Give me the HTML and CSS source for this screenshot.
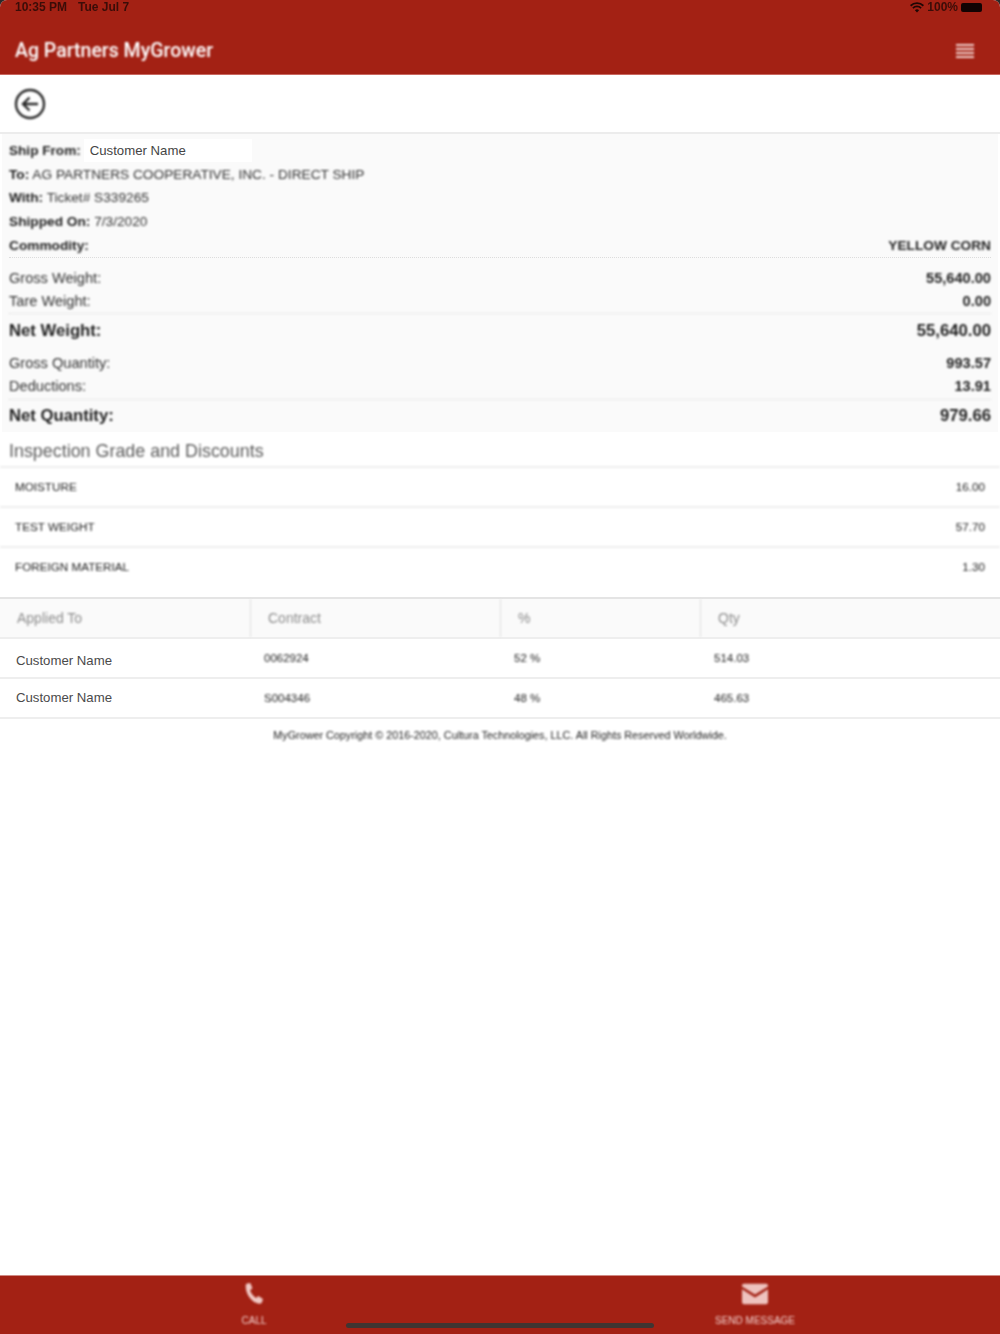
FILE: index.html
```html
<!DOCTYPE html>
<html lang="en">
<head>
<meta charset="utf-8">
<title>Ag Partners MyGrower</title>
<link rel="stylesheet" href="styles.css">
</head>
<body>
<div class="app">
  <header class="appbar">
    <div class="status soft-light">
      <div class="status-left"><span>10:35 PM</span><span>Tue Jul 7</span></div>
      <div class="status-right">
        <svg class="wifi" viewBox="0 0 14 11" width="14" height="11"><path d="M7 10.6 4.9 8.3a3 3 0 0 1 4.2 0L7 10.6ZM3.500 6.800 2.300 5.500a6.800 6.800 0 0 1 9.400 0l-1.200 1.300a5 5 0 0 0-7 0ZM1.200 4.400 0 3.100a10 10 0 0 1 14 0l-1.200 1.300a8.300 8.300 0 0 0-11.600 0Z" fill="#1e0705"/></svg>
        <span>100%</span>
        <span class="battery"></span>
      </div>
    </div>
    <div class="titlebar">
      <h1 class="title soft">Ag Partners MyGrower</h1>
      <svg class="menu soft" viewBox="0 0 18 14" width="18" height="14"><path d="M0 1h18M0 5h18M0 9h18M0 13h18" stroke="#f4d6d2" stroke-width="2"/></svg>
    </div>
  </header>

  <div class="toolbar">
    <svg class="back soft" viewBox="0 0 32 32" width="32" height="32"><circle cx="16" cy="16" r="14" fill="none" stroke="#2a2a2a" stroke-width="2.400"/><path d="M24 16H9M15.500 9.500 9 16l6.500 6.500" fill="none" stroke="#2a2a2a" stroke-width="2.400"/></svg>
  </div>

  <section class="ticket">
    <div class="row"><span class="ship-label soft">Ship From:</span><span class="name-chip">Customer Name</span></div>
    <div class="row soft"><span><b>To:</b> AG PARTNERS COOPERATIVE, INC. - DIRECT SHIP</span></div>
    <div class="row soft"><span><b>With:</b> Ticket# S339265</span></div>
    <div class="row soft"><span><b>Shipped On:</b> 7/3/2020</span></div>
    <div class="row split soft"><b>Commodity:</b><b>YELLOW CORN</b></div>
    <div class="group dotted">
      <div class="row split big soft"><span>Gross Weight:</span><b>55,640.00</b></div>
      <div class="row split big soft"><span>Tare Weight:</span><b>0.00</b></div>
    </div>
    <div class="row split total soft"><b>Net Weight:</b><b>55,640.00</b></div>
    <div class="group qty">
      <div class="row split big soft"><span>Gross Quantity:</span><b>993.57</b></div>
      <div class="row split big soft"><span>Deductions:</span><b>13.91</b></div>
    </div>
    <div class="row split total last soft"><b>Net Quantity:</b><b>979.66</b></div>
  </section>

  <h2 class="section-title soft">Inspection Grade and Discounts</h2>
  <ul class="grades soft">
    <li><span>MOISTURE</span><span>16.00</span></li>
    <li><span>TEST WEIGHT</span><span>57.70</span></li>
    <li><span>FOREIGN MATERIAL</span><span>1.30</span></li>
  </ul>

  <div class="applied">
    <div class="thead">
      <div class="th soft">Applied To</div>
      <div class="th soft">Contract</div>
      <div class="th soft">%</div>
      <div class="th soft">Qty</div>
    </div>
    <div class="tr">
      <div class="td name low">Customer Name</div>
      <div class="td soft">0062924</div>
      <div class="td soft">52 %</div>
      <div class="td soft">514.03</div>
    </div>
    <div class="tr">
      <div class="td name up">Customer Name</div>
      <div class="td soft">S004346</div>
      <div class="td soft">48 %</div>
      <div class="td soft">465.63</div>
    </div>
  </div>

  <p class="copyright soft">MyGrower Copyright © 2016-2020, Cultura Technologies, LLC. All Rights Reserved Worldwide.</p>

  <footer class="tabs">
    <div class="tab soft">
      <svg viewBox="0 0 24 24" width="24" height="24"><path d="M5.200 1.500 8.300 1l2.200 5.300-2.400 2c.9 3 3 5.800 5.900 7.600l2.300-1.800 4.700 3-.9 3c-.4 1.200-1.500 1.900-2.700 1.700C9.800 20.600 3.600 12.500 3.700 3.700c0-1.100.6-2 1.500-2.200Z" fill="#f0c9c5"/></svg>
      <span>CALL</span>
    </div>
    <div class="tab soft">
      <svg viewBox="0 0 28 24" width="26" height="24"><path d="M2 1h24c1.100 0 2 .9 2 2v.8L14 12.500 0 3.800V3c0-1.100.9-2 2-2ZM0 7l14 8.700L28 7v14c0 1.100-.9 2-2 2H2c-1.100 0-2-.9-2-2V7Z" fill="#eec3bf"/></svg>
      <span>SEND MESSAGE</span>
    </div>
    <div class="home-bar"></div>
  </footer>
</div>
</body>
</html>
```

FILE: styles.css
```css
* { box-sizing: border-box; }
html, body { margin: 0; padding: 0; background: #2a2a2a; }
body { font-family: "Liberation Sans", Arial, sans-serif; color: #444; font-size: 13.7px; }
.soft { filter: blur(0.8px); }
.soft-light { filter: blur(0.65px); }

.app {
  width: 1000px;
  height: 1334px;
  background: #fff;
  display: flex;
  flex-direction: column;
  border-radius: 7px 7px 0 0;
  overflow: hidden;
}

.appbar { height: 75px; background: #a32114; border-bottom: 1px solid #c9675f; flex: none; }
.status {
  height: 14px;
  padding: 0 18px 0 15px;
  display: flex;
  justify-content: space-between;
  align-items: center;
  color: #3a0d08;
  font-size: 12px;
  font-weight: bold;
}
.status-left { display: flex; gap: 11px; }
.status-right { display: flex; align-items: center; gap: 3px; }
.battery { width: 21px; height: 9px; background: #120303; border-radius: 2px; }
.titlebar {
  height: 59px;
  padding: 14px 26px 0 15px;
  display: flex;
  justify-content: space-between;
  align-items: center;
}
.title { margin: 0; color: #fff; font: 500 19.500px Roboto, sans-serif; }

.toolbar {
  height: 59px;
  flex: none;
  padding: 0 14px;
  display: flex;
  align-items: center;
  border-bottom: 2px solid #ececec;
}

.ticket { flex: none; margin: 0 2px; height: 298px; background: #fafafa; padding: 5px 7px 0; }
.row { height: 23.700px; display: flex; align-items: center; line-height: 1; color: #333; flex: none; }
.row b { color: #1f1f1f; }
.big { font-size: 14.600px; height: 23.500px; }
.split { justify-content: space-between; }
.ship-label { font-weight: bold; color: #1f1f1f; font-size: 13.600px; }
.name-chip {
  background: #fff;
  color: #444;
  margin-left: 3px;
  height: 23px;
  width: 168px;
  padding-left: 6px;
  display: flex;
  align-items: center;
  font-size: 13.200px;
}
.group { padding-top: 8px; }
.dotted { border-top: 1px dotted #dcdcdc; }
.group.qty { padding: 4px 0 1px; }
.total { height: 34px; font-size: 16.700px; border-top: 1px dotted #dcdcdc; }
.total.last { height: 32px; }

.section-title {
  flex: none;
  margin: 0;
  height: 36px;
  padding: 4px 9px 0;
  display: flex;
  align-items: center;
  color: #5c5c5c;
  font-size: 17.900px;
  font-weight: normal;
  border-bottom: 2px solid #eee;
}

.grades { flex: none; margin: 0; padding: 0; list-style: none; height: 128px; color: #222; font-size: 11.700px; }
.grades li {
  height: 40px;
  padding: 0 15px 1px;
  display: flex;
  justify-content: space-between;
  align-items: center;
  border-bottom: 2px solid #eee;
}
.grades li:last-child { border-bottom: 0; padding-bottom: 3px; }

.applied { flex: none; border-top: 2px solid #e4e4e4; margin-top: 1px; }
.thead, .tr { display: grid; grid-template-columns: 250px 250px 200px 300px; height: 40px; border-bottom: 2px solid #eee; }
.thead { background: #fafafa; }
.th { padding-left: 17px; display: flex; align-items: center; color: #8c8c8c; font-size: 14px; }
.th + .th { border-left: 1px solid #e2e2e2; }
.td { padding-left: 14px; display: flex; align-items: center; color: #222; font-size: 11.500px; }
.td.name { padding-left: 16px; font-size: 13.200px; color: #4a4a4a; }
.low { padding-top: 4px; }
.up { padding-bottom: 2px; }

.copyright { flex: none; margin: 9px 0 0; text-align: center; font-size: 10.800px; line-height: 14px; color: #222; }

.tabs {
  margin-top: auto;
  flex: none;
  height: 59px;
  background: #a32114;
  border-top: 1px solid #d08a84;
  position: relative;
  display: grid;
  grid-template-columns: 508px 494px;
  color: #f2d2cf;
  font-size: 10px;
}
.tab { display: flex; flex-direction: column; align-items: center; padding-top: 6px; }
.tab svg { display: block; }
.tab span { margin-top: 9px; line-height: 12px; }
.home-bar {
  position: absolute;
  left: 346px;
  bottom: 6px;
  width: 308px;
  height: 5px;
  border-radius: 3px;
  background: #3f3532;
}
```
